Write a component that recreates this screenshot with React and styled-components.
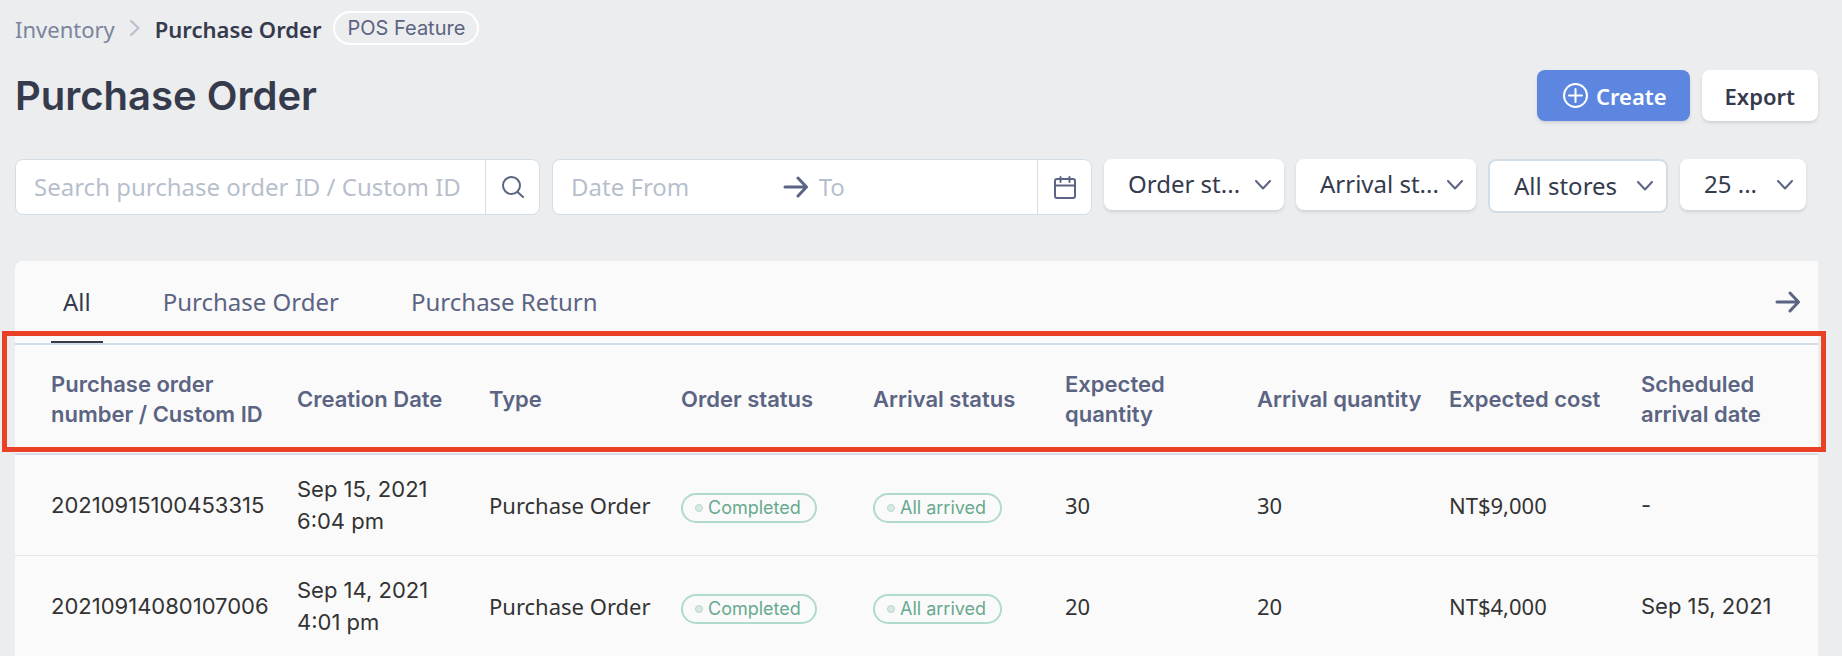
import React, { useState } from "react";
import styled, { createGlobalStyle } from "styled-components";

const noto = `"Noto Sans", "Open Sans", sans-serif`;
const inter = `Inter, "Liberation Sans", sans-serif`;

const tabs = ["All", "Purchase Order", "Purchase Return"];

const columns = [
  "Purchase order number / Custom ID",
  "Creation Date",
  "Type",
  "Order status",
  "Arrival status",
  "Expected quantity",
  "Arrival quantity",
  "Expected cost",
  "Scheduled arrival date",
];

const orders = [
  {
    id: "20210915100453315",
    date: "Sep 15, 2021",
    time: "6:04 pm",
    type: "Purchase Order",
    status: "Completed",
    arrival: "All arrived",
    expected: 30,
    arrived: 30,
    cost: "NT$9,000",
    scheduled: "-",
  },
  {
    id: "20210914080107006",
    date: "Sep 14, 2021",
    time: "4:01 pm",
    type: "Purchase Order",
    status: "Completed",
    arrival: "All arrived",
    expected: 20,
    arrived: 20,
    cost: "NT$4,000",
    scheduled: "Sep 15, 2021",
  },
];

function ArrowIcon() {
  return (
    <Icon width="26" height="22" viewBox="0 0 26 22" strokeWidth="3">
      <path d="M2 11h21M15 2l8.500 9-8.500 9" />
    </Icon>
  );
}

function Filter({ label, text, outlined }) {
  return (
    <SelectBox $outlined={outlined}>
      <Select aria-label={label}>
        <option>{text}</option>
      </Select>
      <Chevron width="16" height="10" viewBox="0 0 16 10" strokeWidth="2">
        <path d="M1 1l7 7.500 7-7.500" />
      </Chevron>
    </SelectBox>
  );
}

function Status({ children }) {
  return (
    <Pill>
      <Dot />
      {children}
    </Pill>
  );
}

export default function App() {
  const [active, setActive] = useState("All");

  return (
    <>
      <GlobalStyle />
      <Page>
        <Breadcrumb aria-label="Breadcrumb">
          <Crumb href="#inventory">Inventory</Crumb>
          <CrumbIcon width="10" height="16" viewBox="0 0 10 16" strokeWidth="2">
            <path d="M1 1l7.500 7L1 15" />
          </CrumbIcon>
          <CurrentCrumb>Purchase Order</CurrentCrumb>
          <Badge>POS Feature</Badge>
        </Breadcrumb>

        <Header>
          <Title>Purchase Order</Title>
          <Actions>
            <Button $primary>
              <Icon width="25" height="25" viewBox="0 0 25 25" strokeWidth="2">
                <circle cx="12.500" cy="12.500" r="11.500" />
                <path d="M12.500 6v13M6 12.500h13" />
              </Icon>
              Create
            </Button>
            <Button>Export</Button>
          </Actions>
        </Header>

        <Filters>
          <Field>
            <Input
              aria-label="Search"
              placeholder="Search purchase order ID / Custom ID"
            />
            <FieldButton aria-label="Search">
              <Icon width="22" height="22" viewBox="0 0 22 22" strokeWidth="2">
                <circle cx="9.500" cy="9.500" r="8.500" />
                <path d="M15.500 16l5.500 5" />
              </Icon>
            </FieldButton>
          </Field>
          <Field>
            <Input aria-label="Date from" placeholder="Date From" />
            <ArrowIcon />
            <Input aria-label="Date to" placeholder="To" $tight />
            <FieldButton aria-label="Open calendar">
              <Icon width="22" height="23" viewBox="0 0 22 23" strokeWidth="2">
                <rect x="1" y="3" width="20" height="19" rx="2" />
                <path d="M1 9.500h20M6.500 1v5M15.500 1v5" />
              </Icon>
            </FieldButton>
          </Field>
          <Filter label="Order status" text="Order st..." />
          <Filter label="Arrival status" text="Arrival st..." />
          <Filter label="Store" text="All stores" outlined />
          <Filter label="Rows per page" text="25 ..." />
        </Filters>

        <Panel>
          <Tabs>
            {tabs.map((tab) => (
              <Tab
                key={tab}
                $active={tab === active}
                onClick={() => setActive(tab)}
              >
                {tab}
              </Tab>
            ))}
            <NextButton aria-label="Next">
              <ArrowIcon />
            </NextButton>
          </Tabs>

          <TableWrap>
            <Table>
              <thead>
                <tr>
                  {columns.map((column) => (
                    <Th key={column}>{column}</Th>
                  ))}
                </tr>
              </thead>
              <tbody>
                {orders.map((order) => (
                  <Row key={order.id}>
                    <Td>{order.id}</Td>
                    <Td>
                      {order.date}
                      <br />
                      {order.time}
                    </Td>
                    <Td $noto>{order.type}</Td>
                    <Td>
                      <Status>{order.status}</Status>
                    </Td>
                    <Td>
                      <Status>{order.arrival}</Status>
                    </Td>
                    <Td $noto>{order.expected}</Td>
                    <Td $noto>{order.arrived}</Td>
                    <Td $noto>{order.cost}</Td>
                    <Td>{order.scheduled}</Td>
                  </Row>
                ))}
              </tbody>
            </Table>
            <Highlight />
          </TableWrap>
        </Panel>
      </Page>
    </>
  );
}

const GlobalStyle = createGlobalStyle`
  * {
    box-sizing: border-box;
  }
  body {
    margin: 0;
    background-color: #ecedef;
    font-family: ${noto};
    color: #353b4d;
  }
  button, input, select {
    font-family: inherit;
    color: inherit;
  }
`;

const Page = styled.main`
  padding: 11px 24px 0 15px;
`;

const Icon = styled.svg`
  flex: none;
  display: block;
  fill: none;
  stroke: currentColor;
  stroke-linecap: round;
  stroke-linejoin: round;
`;

const Breadcrumb = styled.nav`
  display: flex;
  align-items: center;
  height: 34px;
  font-size: 22px;
  line-height: 30px;
`;

const Crumb = styled.a`
  padding-top: 2px;
  color: #7b849b;
  text-decoration: none;
`;

const CrumbIcon = styled(Icon)`
  margin: 0 15px;
  color: #b7bfcd;
`;

const CurrentCrumb = styled.span`
  padding-top: 2px;
  font-weight: 600;
`;

const Badge = styled.span`
  margin-left: 12px;
  padding: 0 12px;
  border: 2px solid #fff;
  border-radius: 17px;
  color: #5b6482;
  font-family: ${inter};
  font-size: 20px;
`;

const Header = styled.header`
  display: flex;
  align-items: center;
  justify-content: space-between;
  margin-top: 25px;
`;

const Title = styled.h1`
  margin: 0;
  font-family: ${inter};
  font-size: 40px;
  font-weight: 600;
  line-height: 48px;
`;

const Actions = styled.div`
  display: flex;
  gap: 12px;
`;

const Button = styled.button`
  display: flex;
  align-items: center;
  gap: 8px;
  height: 51px;
  padding: 0 23px 0 ${(props) => (props.$primary ? "26px" : "23px")};
  border: 0;
  border-radius: 8px;
  background-color: ${(props) => (props.$primary ? "#5c86df" : "#fff")};
  box-shadow: 0 2px 3px rgba(53, 59, 77, 0.15);
  color: ${(props) => (props.$primary ? "#fff" : "#353b4d")};
  font-size: 22px;
  font-weight: 600;
  cursor: pointer;
`;

const Filters = styled.div`
  display: grid;
  grid-template-columns: minmax(0, 35fr) minmax(0, 36fr) 180px 180px 180px 126px;
  gap: 12px;
  align-items: start;
  margin-top: 38px;
  padding-right: 12px;
`;

const Field = styled.div`
  display: flex;
  align-items: center;
  height: 56px;
  border: 1px solid #d3dde6;
  border-radius: 8px;
  background-color: #fff;
  color: #5b6482;
`;

const Input = styled.input`
  flex: 1 1 50%;
  min-width: 0;
  height: 100%;
  padding: 0 0 2px ${(props) => (props.$tight ? "10px" : "18px")};
  border: 0;
  outline: 0;
  background: transparent;
  font-size: 24px;
  &::placeholder {
    color: #b7bfcd;
    opacity: 1;
  }
`;

const FieldButton = styled.button`
  display: flex;
  flex: none;
  align-items: center;
  justify-content: center;
  width: 54px;
  height: 100%;
  padding: 0;
  border: 0;
  border-left: 1px solid #d3dde6;
  background: transparent;
  cursor: pointer;
`;

const SelectBox = styled.div`
  display: grid;
  align-items: center;
  height: ${(props) => (props.$outlined ? "54px" : "51px")};
  border: ${(props) => (props.$outlined ? "2px solid #d3dde6" : "0")};
  border-radius: 8px;
  background-color: #fff;
  box-shadow: ${(props) =>
    props.$outlined ? "none" : "0 2px 3px rgba(53, 59, 77, 0.15)"};
`;

const Select = styled.select`
  grid-area: 1 / 1;
  width: 100%;
  height: 100%;
  padding: 0 24px 2px;
  border: 0;
  outline: 0;
  appearance: none;
  background: transparent;
  font-size: 24px;
  cursor: pointer;
`;

const Chevron = styled(Icon)`
  grid-area: 1 / 1;
  justify-self: end;
  margin-right: 13px;
  color: #5b6482;
  pointer-events: none;
`;

const Panel = styled.section`
  margin-top: 46px;
  border-radius: 8px 0 0 0;
  background-color: #fafafa;
`;

const Tabs = styled.div`
  display: flex;
  gap: 48px;
  height: 84px;
  padding: 0 17px 0 36px;
  border-bottom: 2px solid #d3dde6;
`;

const Tab = styled.button`
  padding: 0 12px;
  border: 0;
  border-bottom: 2px solid
    ${(props) => (props.$active ? "#353b4d" : "transparent")};
  background: transparent;
  color: ${(props) => (props.$active ? "#353b4d" : "#5b6482")};
  font-size: 24px;
  cursor: pointer;
`;

const NextButton = styled.button`
  margin-left: auto;
  padding: 0;
  border: 0;
  background: transparent;
  color: #5b6482;
  cursor: pointer;
`;

const TableWrap = styled.div`
  position: relative;
`;

const Table = styled.table`
  width: 100%;
  border-collapse: separate;
  border-spacing: 0;
  table-layout: fixed;
`;

const Th = styled.th`
  height: 110px;
  padding: 0 12px 0 0;
  border-bottom: 2px solid #d3dde6;
  color: #5b6482;
  font-family: ${inter};
  font-size: 22px;
  font-weight: 600;
  line-height: 30px;
  text-align: left;
  &:first-child {
    width: 282px;
    padding-left: 36px;
  }
  &:last-child {
    width: 177px;
  }
`;

const Td = styled.td`
  height: 101px;
  padding: 0;
  border-bottom: 1px solid #e6e8ea;
  color: #333;
  font-family: ${(props) => (props.$noto ? noto : inter)};
  font-size: 22px;
  line-height: 32px;
  &:first-child {
    padding-left: 36px;
  }
`;

const Row = styled.tr`
  &:last-child ${Td} {
    height: 100px;
    border-bottom: 0;
  }
`;

const Pill = styled.span`
  display: inline-flex;
  align-items: center;
  height: 30px;
  margin-top: 4px;
  padding: 0 14px 0 12px;
  border: 2px solid #b0dbc9;
  border-radius: 15px;
  color: #67a98e;
  font-size: 18px;
  line-height: 26px;
  vertical-align: middle;
`;

const Dot = styled.span`
  width: 8px;
  height: 8px;
  margin-right: 5px;
  border: 1px solid #b0dbc9;
  border-radius: 50%;
  background-color: #d9e9e2;
`;

/* red frame that calls out the column headings */
const Highlight = styled.div`
  position: absolute;
  top: -14px;
  left: -13px;
  right: -8px;
  height: 121px;
  border: 5px solid #ea4026;
  pointer-events: none;
`;
